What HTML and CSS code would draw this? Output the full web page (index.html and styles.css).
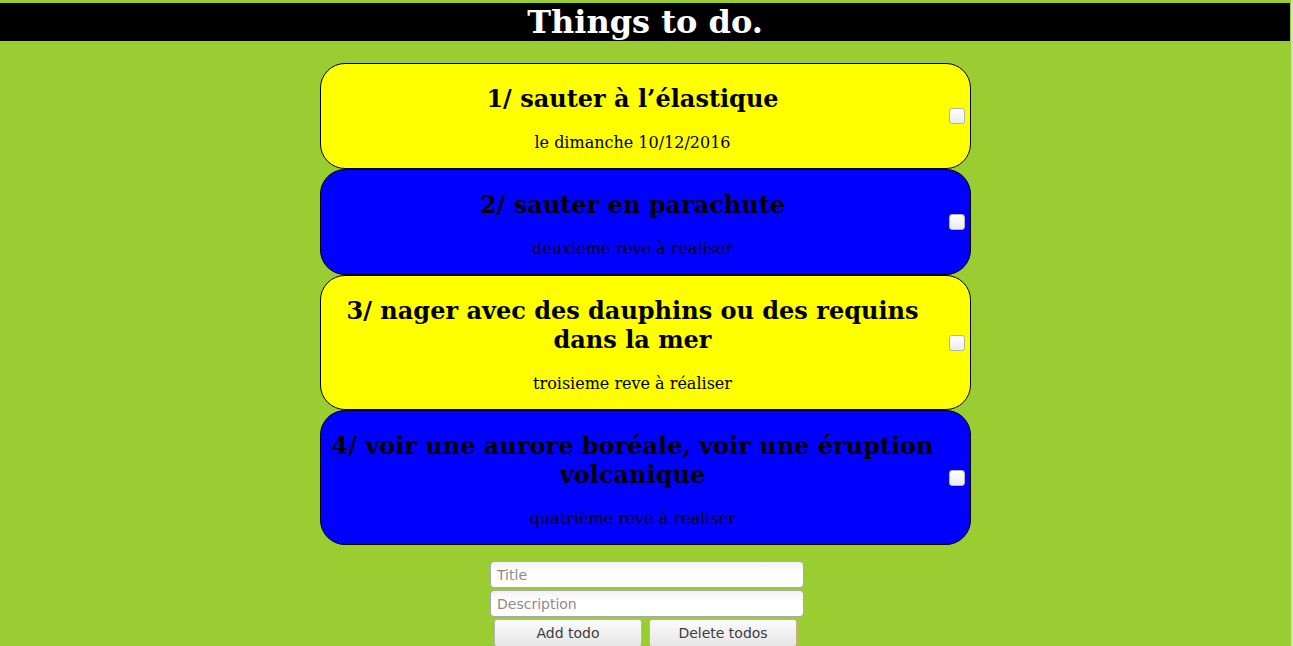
FILE: index.html
```html
<!DOCTYPE html>
<html lang="fr">
<head>
<meta charset="utf-8">
<title>Things to do.</title>
<link rel="stylesheet" href="styles.css">
</head>
<body>
<header class="topbar">
  <h1 class="topbar-title">Things to do.</h1>
</header>
<main class="todo-list">
  <div class="todo todo-yellow">
    <div class="todo-text">
      <h2 class="todo-title">1/ sauter à l’élastique</h2>
      <p class="todo-desc">le dimanche 10/12/2016</p>
    </div>
    <input class="todo-check" type="checkbox">
  </div>
  <div class="todo todo-blue">
    <div class="todo-text">
      <h2 class="todo-title">2/ sauter en parachute</h2>
      <p class="todo-desc">deuxieme reve à realiser</p>
    </div>
    <input class="todo-check" type="checkbox">
  </div>
  <div class="todo todo-yellow">
    <div class="todo-text">
      <h2 class="todo-title">3/ nager avec des dauphins ou des requins dans la mer</h2>
      <p class="todo-desc">troisieme reve à réaliser</p>
    </div>
    <input class="todo-check" type="checkbox">
  </div>
  <div class="todo todo-blue">
    <div class="todo-text">
      <h2 class="todo-title">4/ voir une aurore boréale, voir une éruption volcanique</h2>
      <p class="todo-desc">quatrième reve à realiser</p>
    </div>
    <input class="todo-check" type="checkbox">
  </div>
</main>
<form class="add-form">
  <input class="field" type="text" placeholder="Title">
  <input class="field" type="text" placeholder="Description">
  <div class="actions">
    <button class="btn" type="button">Add todo</button>
    <button class="btn btn-danger" type="button">Delete todos</button>
  </div>
</form>
</body>
</html>
```

FILE: styles.css
```css
html {
  background: linear-gradient(to left, #d9d9d9 2px, #9acd32 2px);
  min-height: 100%;
}
body {
  margin: 0 3px 0 0;
  background: #9acd32;
  font-family: "DejaVu Serif", serif;
  color: #000;
  padding-bottom: 20px;
}
.topbar {
  margin-top: 3px;
  background: #000;
  height: 38px;
}
.topbar-title {
  margin: 0;
  text-align: center;
  color: #fff;
  font-size: 32px;
  line-height: 38px;
  font-weight: bold;
}
.todo-list {
  width: 651px;
  margin: 22px auto 0;
  display: flex;
  flex-direction: column;
}
.todo {
  display: flex;
  align-items: center;
  border: 1px solid #000;
  border-radius: 25px;
}
.todo-yellow {
  background: #ffff00;
}
.todo-blue {
  background: #0000ff;
}
.todo-text {
  flex: 1;
  text-align: center;
}
.todo-title {
  font-size: 24px;
  font-weight: bold;
  margin: 20px 0;
  line-height: 29px;
}
.todo-desc {
  font-size: 16px;
  margin: 20px 0 16px;
  line-height: 19px;
}
.todo-check {
  appearance: none;
  -webkit-appearance: none;
  width: 16px;
  height: 16px;
  margin: 0 5px 0 4px;
  border: 1px solid #b3b3b3;
  border-radius: 3px;
  background: linear-gradient(#ffffff, #ebebeb);
  box-sizing: border-box;
  flex: none;
}
.add-form {
  width: 314px;
  margin: 16px auto 0;
  padding-left: 4px;
  display: flex;
  flex-direction: column;
  gap: 2px;
}
.field {
  box-sizing: border-box;
  width: 314px;
  height: 27px;
  margin: 0;
  padding: 2px 6px;
  border: 1px solid #a9a9a9;
  border-radius: 4px;
  background: linear-gradient(#f2f2f2, #ffffff 45%);
  font-family: "DejaVu Sans", sans-serif;
  font-size: 14px;
  color: #333;
}
.field::placeholder {
  color: #948a84;
}
.actions {
  display: flex;
  gap: 7px;
  padding-left: 4px;
}
.btn {
  box-sizing: border-box;
  width: 148px;
  height: 28px;
  margin: 0;
  border: 1px solid #b5b5b5;
  border-radius: 3px;
  background: linear-gradient(#fbfbfb, #e6e6e6);
  font-family: "DejaVu Sans", sans-serif;
  font-size: 14px;
  color: #3c3c3c;
  padding: 0;
}
.btn-danger {
  border-color: #e3a58c;
}
```
